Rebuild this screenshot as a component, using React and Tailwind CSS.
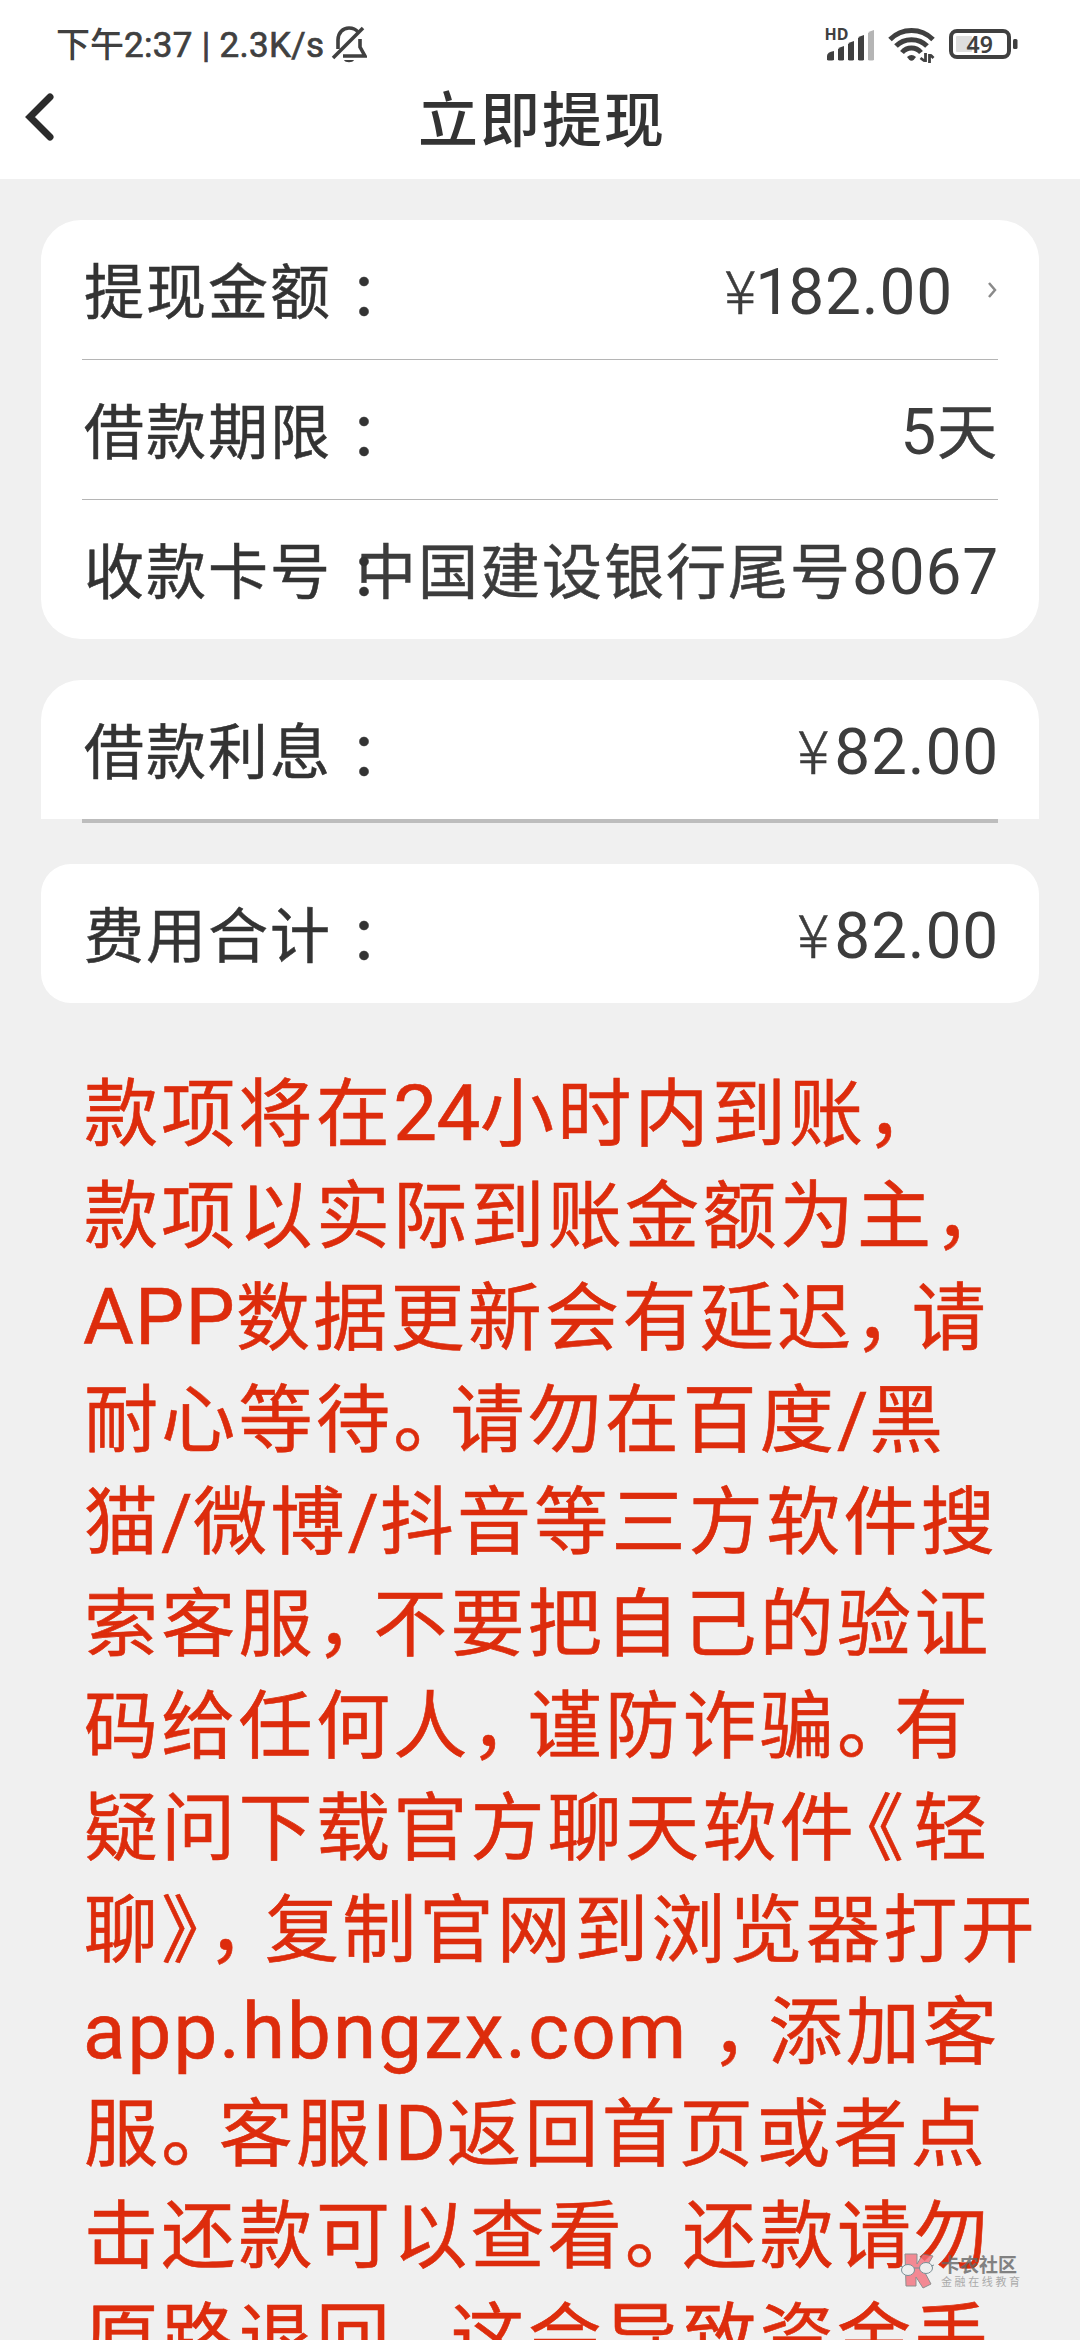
const firstCard = [
  { label: '提现金额', amount: '182.00', arrow: true },
  { label: '借款期限', amount: '5', unit: '天' },
  { label: '收款卡号', bank: '中国建设银行尾号', amount: '8067' },
];

const notice = [
  '款项将在24小时内到账，',
  '款项以实际到账金额为主，',
  'APP数据更新会有延迟，请',
  '耐心等待。请勿在百度/黑',
  '猫/微博/抖音等三方软件搜',
  '索客服，不要把自己的验证',
  '码给任何人，谨防诈骗。有',
  '疑问下载官方聊天软件《轻',
  '聊》，复制官网到浏览器打开',
  'app.hbngzx.com ，添加客',
  '服。客服ID返回首页或者点',
  '击还款可以查看。还款请勿',
  '原路退回，这会导致资金丢',
];

// punctuation takes less than a full cell, latin runs use their own face
const pieceClass = (piece) => {
  if (piece === '》') return 'mr-[6px]';
  if (piece === '《') return '-ml-[27px] mr-[6px]';
  if ('，。'.includes(piece)) return '-mr-[20px]';
  if (piece.startsWith('app')) return "-ml-[1px] mr-[3px] font-['Roboto',sans-serif] text-[78px] tracking-[2.1px]";
  if (/^[A-Z]/.test(piece)) return "-ml-[1px] font-['Roboto',sans-serif] text-[78px] tracking-[1.2px]";
  if (/^\d/.test(piece)) return "font-['Roboto',sans-serif] text-[78px] tracking-[-0.5px]";
  if (piece === '/') return "font-['Roboto',sans-serif] text-[76px] tracking-[0.5px]";
  return '';
};

function NoticeLine({ text }) {
  const pieces = text.split(/([，。《》/]|[A-Za-z0-9.]+)/).filter(Boolean);
  return (
    <p className="h-[102px] whitespace-pre">
      {pieces.map((piece, i) => (
        <span key={i} className={pieceClass(piece)}>{piece}</span>
      ))}
    </p>
  );
}

function Amount({ value }) {
  // a leading 1 sits tight between its neighbours
  const lead = value.startsWith('1') ? '1' : '';
  return (
    <span className="font-['Roboto',sans-serif] text-[64px] tracking-[0.8px] [-webkit-text-stroke:0px]">
      {lead && <span className="-ml-[6px] tracking-[-3px]">{lead}</span>}
      {value.slice(lead.length)}
    </span>
  );
}

function Row({ label, amount, unit, bank, arrow }) {
  return (
    <div className="h-[139px] pl-[43px] pr-[42px] flex items-center justify-between whitespace-nowrap text-[60px] leading-[80px] tracking-[2px] text-[#333] [-webkit-text-stroke:0.5px]">
      <div className="w-[270px] shrink-0 pb-[3px]">
        {label}
        <span lang="zh-TW" className="relative top-[5px] left-[2px] font-['Noto_Sans_CJK_TC',sans-serif]">：</span>
      </div>
      <div className="flex items-center text-[#3c3c3c]">
        <div className="h-[80px] mb-[3px] -mr-[2px]">
          {!unit && !bank && <span className="font-light tracking-[5px]">¥</span>}
          {bank && <span className="-ml-6">{bank}</span>}
          <Amount value={amount} />
          {unit && <span>{unit}</span>}
        </div>
        {arrow && (
          <svg className="ml-[37px] w-[9px] h-[16px]" viewBox="0 0 9 16" fill="none" stroke="#8a8a8a" strokeWidth="2.5">
            <path d="M1 1l6 7-6 7" />
          </svg>
        )}
      </div>
    </div>
  );
}

function StatusBar() {
  return (
    <div className="h-[64px] pl-[56px] pr-[61px] flex items-start justify-between text-[#404040]">
      <div className="flex items-start pt-[21px]">
        <div className="h-[44px] whitespace-pre text-[34px] leading-[44px] font-medium">
          下午<span className="font-['Roboto',sans-serif] text-[35px] font-normal tracking-[0.3px] [-webkit-text-stroke:0.7px]">2:37 | 2.3K/s</span>
        </div>
        <svg className="mt-[5px] ml-[7px] w-[36px] h-[38px]" viewBox="0 0 36 38" fill="none" stroke="currentColor" strokeWidth="3.6">
          <path d="M7 23V14C7 6.500 12 2 18 2c4 0 7 1.500 9 4" />
          <path d="M29 13v8l5 9H12" />
          <path d="M2 32L32 2" />
          <path d="M13 34h10c-1 3-9 3-10 0z" fill="currentColor" stroke="none" />
        </svg>
      </div>
      <div className="flex items-start pt-[27px]">
        <svg className="w-[50px] h-[36px] overflow-visible" viewBox="0 0 50 36" fill="currentColor">
          <text x="-0.500" y="13" fontSize="16" fontWeight="700" fontFamily="Noto Sans, sans-serif">HD</text>
          <path d="M2 33v-4q0-4 7-5v9q-4 1-7 0z" />
          <path d="M13 33V22q2-2 6-3v14q-3 1-6 0z" />
          <path d="M23 33V17q2-2 6-3v19q-3 1-6 0z" />
          <path d="M33 33V11q2-2 6-3v25q-3 1-6 0z" />
          <path d="M43 33V6q2-2 6-3v30q-3 1-6 0z" fill="#b5b5b5" />
        </svg>
        <svg className="ml-[13px] w-[47px] h-[36px]" viewBox="0 0 47 36" fill="none" stroke="currentColor" strokeWidth="5">
          <path d="M2 12.500C14 .5 33 .5 45 12.500" />
          <path d="M8 19c8-8.500 23-8.500 31 0" />
          <path d="M14 25.500c5-6 14-6 19 0" />
          <path d="M19 30q4.500-4 9 0l-2 2.500q-2.500 2.500-5 0z" fill="currentColor" stroke="none" />
          <path d="M37.500 26v9m-1-1l-4-3M41.500 36v-9m1 1l3 3" strokeWidth="2.800" />
        </svg>
        <svg className="ml-[14px] w-[70px] h-[36px]" viewBox="0 0 70 36">
          <rect x="2" y="4" width="58" height="26" rx="6" fill="#fff" stroke="currentColor" strokeWidth="4" />
          <rect x="7" y="9" width="16" height="16" rx="1" fill="#dedede" />
          <text x="17.500" y="25.500" fontSize="23" fontWeight="600" fill="currentColor" fontFamily="Noto Sans, sans-serif">49</text>
          <rect x="64" y="12" width="4.500" height="10" rx="1.500" fill="currentColor" />
        </svg>
      </div>
    </div>
  );
}

function Watermark() {
  return (
    <div className="absolute left-[900px] top-[2252px] flex opacity-80">
      <svg className="w-[36px] h-[37px]" viewBox="0 0 36 37">
        <path d="M5 2h12v10l6-10 10 2-9 15 7 13-8 4-7-11v9H6z" fill="#f4707c" stroke="#777" strokeWidth="1" />
        <ellipse cx="8" cy="18" rx="6.500" ry="5.500" fill="#eee" stroke="#5d7780" />
        <ellipse cx="26" cy="16" rx="6.500" ry="5.500" fill="#eee" stroke="#5d7780" />
        <path d="M0 14l3 1m11 1h6m11-2l3-1" stroke="#5d7780" />
      </svg>
      <div className="ml-[5px] pt-[2px]">
        <div className="text-[19px] leading-[19px] font-bold text-[#666]">卡农社区</div>
        <div className="mt-[3px] text-[11px] leading-[11px] tracking-[2.6px] text-[#999]">金融在线教育</div>
      </div>
    </div>
  );
}

export default function App() {
  return (
    <div lang="zh-CN" className="relative w-[1080px] h-[2340px] overflow-hidden bg-[#f0f0f0] font-['Noto_Sans_CJK_SC',sans-serif]">
      <header className="h-[179px] bg-white">
        <StatusBar />
        <div className="h-[106px] pl-[24px] pr-[50px] flex items-center">
          <svg className="w-[30px] h-[50px]" viewBox="0 0 30 50" fill="none" stroke="#2b2b2b" strokeWidth="7" strokeLinecap="round">
            <path d="M26 5L6 25l20 20" />
          </svg>
          <h1 className="flex-1 pb-[2px] text-center text-[60px] leading-none tracking-[2px] font-medium text-[#333]">立即提现</h1>
        </div>
      </header>

      <main className="pt-[41px] px-[41px]">
        <section className="h-[419px] rounded-[40px] bg-white">
          {firstCard.map((row, i) => (
            <div key={row.label}>
              {i > 0 && <div className="mx-[41px] h-px bg-[#b5b5b5]" />}
              <Row {...row} />
            </div>
          ))}
        </section>

        <section className="mt-[41px] rounded-t-[40px] bg-white">
          <Row label="借款利息" amount="82.00" />
        </section>
        <div className="mx-[41px] h-[4px] bg-[#bdbdbd]" />

        <section className="mt-[41px] rounded-[30px] bg-white">
          <Row label="费用合计" amount="82.00" />
        </section>

        <section className="mt-[54px] pl-[43px] text-[74px] leading-[102px] tracking-[3.3px] text-[#dd2c0c] [-webkit-text-stroke:0.6px]">
          {notice.map((line) => (
            <NoticeLine key={line} text={line} />
          ))}
        </section>
      </main>

      <Watermark />
    </div>
  );
}
